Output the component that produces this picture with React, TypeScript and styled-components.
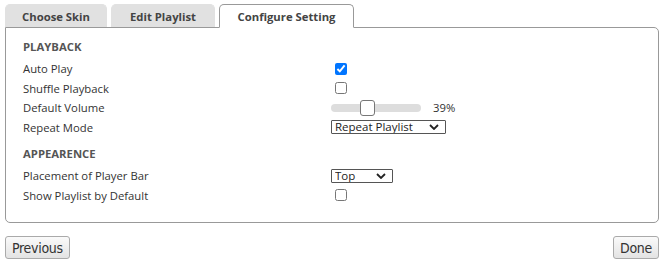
import { useState } from 'react';
import styled, { createGlobalStyle } from 'styled-components';

const GlobalStyle = createGlobalStyle`
  body {
    margin: 0;
    background: #ffffff;
    font-family: 'Open Sans', 'Noto Sans', sans-serif;
    color: #333333;
  }
`;

const Page = styled.div`
  display: flex;
  flex-direction: column;
  padding: 4px 4px 0 5px;
`;

const TabBar = styled.div`
  display: flex;
  flex-direction: row;
  align-items: flex-end;
  gap: 4px;
  position: relative;
  z-index: 1;
`;

const Tab = styled.div<{ $active?: boolean; $width: number }>`
  width: ${({ $width }) => $width}px;
  height: ${({ $active }) => ($active ? 24 : 23)}px;
  box-sizing: border-box;
  display: flex;
  align-items: center;
  justify-content: center;
  font-size: 11.3px;
  font-weight: 700;
  color: #444444;
  border-radius: 5px 5px 0 0;
  background: ${({ $active }) => ($active ? '#ffffff' : '#e1e1e1')};
  border: ${({ $active }) => ($active ? '1px solid #999999' : '1px solid #e1e1e1')};
  border-bottom: ${({ $active }) => ($active ? '1px solid #ffffff' : '0')};
  margin-bottom: ${({ $active }) => ($active ? -1 : 0)}px;
  cursor: pointer;
`;

const Panel = styled.div`
  border: 1px solid #999999;
  border-radius: 0 5px 5px 5px;
  padding: 8px 17px 17px 17px;
  display: flex;
  flex-direction: column;
`;

const SectionTitle = styled.div<{ $first?: boolean }>`
  height: 20px;
  display: flex;
  align-items: center;
  font-size: 11.3px;
  font-weight: 700;
  color: #555555;
  margin-top: ${({ $first }) => ($first ? 0 : 6)}px;
  margin-bottom: 3px;
`;

const Row = styled.div`
  display: grid;
  grid-template-columns: 308px 1fr;
  align-items: center;
  height: 19.5px;
  font-size: 11.3px;
  color: #333333;
`;

const Control = styled.div`
  display: flex;
  align-items: center;
  gap: 12px;
`;

const Check = styled.input.attrs({ type: 'checkbox' })`
  width: 12px;
  height: 12px;
  margin: 0 0 0 4px;
`;

const Range = styled.input.attrs({ type: 'range' })`
  -webkit-appearance: none;
  appearance: none;
  width: 90px;
  height: 8px;
  margin: 0;
  border-radius: 4px;
  background: #dddddd;
  outline: none;

  &::-webkit-slider-thumb {
    -webkit-appearance: none;
    width: 15px;
    height: 16px;
    border-radius: 3px;
    background: #ffffff;
    border: 1px solid #777777;
    box-sizing: border-box;
  }
`;

const Percent = styled.span`
  font-size: 11.3px;
  color: #333333;
`;

const chevron =
  "data:image/svg+xml;utf8,<svg xmlns='http://www.w3.org/2000/svg' width='10' height='6' viewBox='0 0 10 6'><path d='M1 1l4 4 4-4' fill='none' stroke='%23222' stroke-width='1.8'/></svg>";

const Select = styled.select<{ $width: number }>`
  -webkit-appearance: none;
  appearance: none;
  width: ${({ $width }) => $width}px;
  height: 14px;
  box-sizing: border-box;
  padding: 0 0 0 3px;
  border: 1px solid #555555;
  border-radius: 1px;
  background: #ffffff url("${chevron}") no-repeat right 6px center;
  font-family: 'Open Sans', 'Noto Sans', sans-serif;
  font-size: 11.5px;
  line-height: 12px;
  color: #222222;
  outline: none;
`;

const Footer = styled.div`
  display: flex;
  justify-content: space-between;
  margin-top: 13px;
`;

const Button = styled.button`
  height: 23px;
  padding: 0 6px;
  border: 1px solid #aaaaaa;
  border-radius: 3px;
  background: linear-gradient(#fafafa, #e3e3e3);
  font-family: 'Liberation Sans Narrow', 'DejaVu Sans Condensed', 'Liberation Sans', sans-serif;
  font-size: 14px;
  letter-spacing: -0.3px;
  color: #333333;
  cursor: pointer;
`;

const App = () => {
  const [autoPlay, setAutoPlay] = useState(true);
  const [shuffle, setShuffle] = useState(false);
  const [volume, setVolume] = useState(39);
  const [repeat, setRepeat] = useState('playlist');
  const [placement, setPlacement] = useState('top');
  const [showPlaylist, setShowPlaylist] = useState(false);

  return (
    <Page>
      <GlobalStyle />
      <TabBar>
        <Tab $width={102}>Choose Skin</Tab>
        <Tab $width={104}>Edit Playlist</Tab>
        <Tab $width={135} $active>
          Configure Setting
        </Tab>
      </TabBar>
      <Panel>
        <SectionTitle $first>PLAYBACK</SectionTitle>
        <Row>
          <span>Auto Play</span>
          <Control>
            <Check checked={autoPlay} onChange={(e) => setAutoPlay(e.target.checked)} />
          </Control>
        </Row>
        <Row>
          <span>Shuffle Playback</span>
          <Control>
            <Check checked={shuffle} onChange={(e) => setShuffle(e.target.checked)} />
          </Control>
        </Row>
        <Row>
          <span>Default Volume</span>
          <Control>
            <Range
              min={0}
              max={100}
              value={volume}
              onChange={(e) => setVolume(Number(e.target.value))}
            />
            <Percent>{volume}%</Percent>
          </Control>
        </Row>
        <Row>
          <span>Repeat Mode</span>
          <Control>
            <Select $width={115} value={repeat} onChange={(e) => setRepeat(e.target.value)}>
              <option value="none">No Repeat</option>
              <option value="track">Repeat Track</option>
              <option value="playlist">Repeat Playlist</option>
            </Select>
          </Control>
        </Row>
        <SectionTitle>APPEARENCE</SectionTitle>
        <Row>
          <span>Placement of Player Bar</span>
          <Control>
            <Select $width={62} value={placement} onChange={(e) => setPlacement(e.target.value)}>
              <option value="top">Top</option>
              <option value="bottom">Bottom</option>
            </Select>
          </Control>
        </Row>
        <Row>
          <span>Show Playlist by Default</span>
          <Control>
            <Check checked={showPlaylist} onChange={(e) => setShowPlaylist(e.target.checked)} />
          </Control>
        </Row>
      </Panel>
      <Footer>
        <Button>Previous</Button>
        <Button>Done</Button>
      </Footer>
    </Page>
  );
};

export default App;
